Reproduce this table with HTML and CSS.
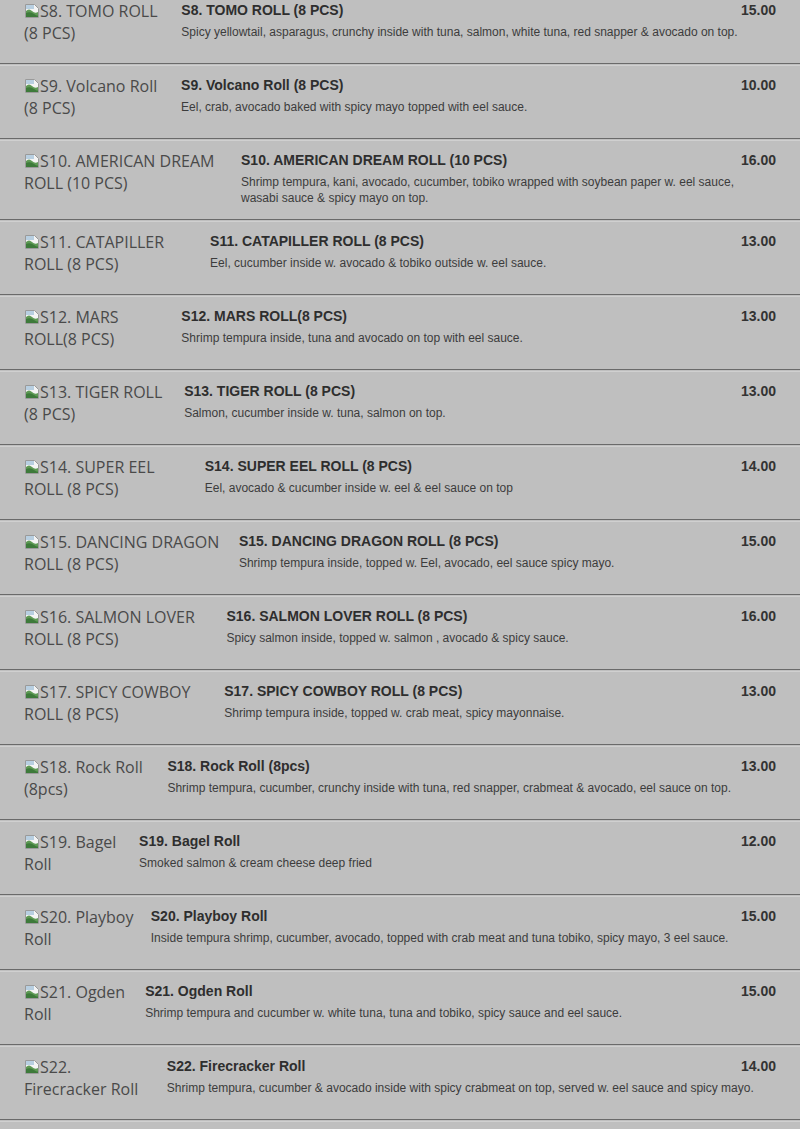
FILE: index.html
```html
<!DOCTYPE html>
<html lang="en">
<head>
<meta charset="utf-8">
<title>Sushi Rolls</title>
<link rel="stylesheet" href="styles.css">
</head>
<body>
<svg width="0" height="0" class="defs" aria-hidden="true">
  <defs>
    <symbol id="broken" viewBox="0 0 16 16">
      <path d="M1.5 1.5h9l4 4v9h-13z" fill="#f4f4f4" stroke="#9a9a9a"/>
      <path d="M2 8 Q5 5 8 8 T14 9 V14 H2z" fill="#5f9a55"/>
      <path d="M2 2h8v4H2z" fill="#a9c6dc" opacity="0.8"/>
      <path d="M2 10 Q6 8 10 11 T14 12 V14 H2z" fill="#3d7a3a"/>
    </symbol>
  </defs>
</svg>
<div class="menu">
  <div class="item">
    <div class="thumb"><svg class="bi"><use href="#broken"/></svg>S8. TOMO ROLL (8 PCS)</div>
    <div class="info"><div class="price">15.00</div><div class="name">S8. TOMO ROLL (8 PCS)</div><div class="desc">Spicy yellowtail, asparagus, crunchy inside with tuna, salmon, white tuna, red snapper &amp; avocado on top.</div></div>
  </div>
  <div class="item">
    <div class="thumb"><svg class="bi"><use href="#broken"/></svg>S9. Volcano Roll (8 PCS)</div>
    <div class="info"><div class="price">10.00</div><div class="name">S9. Volcano Roll (8 PCS)</div><div class="desc">Eel, crab, avocado baked with spicy mayo topped with eel sauce.</div></div>
  </div>
  <div class="item">
    <div class="thumb"><svg class="bi"><use href="#broken"/></svg>S10. AMERICAN DREAM ROLL (10 PCS)</div>
    <div class="info"><div class="price">16.00</div><div class="name">S10. AMERICAN DREAM ROLL (10 PCS)</div><div class="desc">Shrimp tempura, kani, avocado, cucumber, tobiko wrapped with soybean paper w. eel sauce, wasabi sauce &amp; spicy mayo on top.</div></div>
  </div>
  <div class="item">
    <div class="thumb"><svg class="bi"><use href="#broken"/></svg>S11. CATAPILLER ROLL (8 PCS)</div>
    <div class="info"><div class="price">13.00</div><div class="name">S11. CATAPILLER ROLL (8 PCS)</div><div class="desc">Eel, cucumber inside w. avocado &amp; tobiko outside w. eel sauce.</div></div>
  </div>
  <div class="item">
    <div class="thumb"><svg class="bi"><use href="#broken"/></svg>S12. MARS ROLL(8 PCS)</div>
    <div class="info"><div class="price">13.00</div><div class="name">S12. MARS ROLL(8 PCS)</div><div class="desc">Shrimp tempura inside, tuna and avocado on top with eel sauce.</div></div>
  </div>
  <div class="item">
    <div class="thumb"><svg class="bi"><use href="#broken"/></svg>S13. TIGER ROLL (8 PCS)</div>
    <div class="info"><div class="price">13.00</div><div class="name">S13. TIGER ROLL (8 PCS)</div><div class="desc">Salmon, cucumber inside w. tuna, salmon on top.</div></div>
  </div>
  <div class="item">
    <div class="thumb"><svg class="bi"><use href="#broken"/></svg>S14. SUPER EEL ROLL (8 PCS)</div>
    <div class="info"><div class="price">14.00</div><div class="name">S14. SUPER EEL ROLL (8 PCS)</div><div class="desc">Eel, avocado &amp; cucumber inside w. eel &amp; eel sauce on top</div></div>
  </div>
  <div class="item">
    <div class="thumb"><svg class="bi"><use href="#broken"/></svg>S15. DANCING DRAGON ROLL (8 PCS)</div>
    <div class="info"><div class="price">15.00</div><div class="name">S15. DANCING DRAGON ROLL (8 PCS)</div><div class="desc">Shrimp tempura inside, topped w. Eel, avocado, eel sauce spicy mayo.</div></div>
  </div>
  <div class="item">
    <div class="thumb"><svg class="bi"><use href="#broken"/></svg>S16. SALMON LOVER ROLL (8 PCS)</div>
    <div class="info"><div class="price">16.00</div><div class="name">S16. SALMON LOVER ROLL (8 PCS)</div><div class="desc">Spicy salmon inside, topped w. salmon , avocado &amp; spicy sauce.</div></div>
  </div>
  <div class="item">
    <div class="thumb"><svg class="bi"><use href="#broken"/></svg>S17. SPICY COWBOY ROLL (8 PCS)</div>
    <div class="info"><div class="price">13.00</div><div class="name">S17. SPICY COWBOY ROLL (8 PCS)</div><div class="desc">Shrimp tempura inside, topped w. crab meat, spicy mayonnaise.</div></div>
  </div>
  <div class="item">
    <div class="thumb"><svg class="bi"><use href="#broken"/></svg>S18. Rock Roll (8pcs)</div>
    <div class="info"><div class="price">13.00</div><div class="name">S18. Rock Roll (8pcs)</div><div class="desc">Shrimp tempura, cucumber, crunchy inside with tuna, red snapper, crabmeat &amp; avocado, eel sauce on top.</div></div>
  </div>
  <div class="item">
    <div class="thumb"><svg class="bi"><use href="#broken"/></svg>S19. Bagel Roll</div>
    <div class="info"><div class="price">12.00</div><div class="name">S19. Bagel Roll</div><div class="desc">Smoked salmon &amp; cream cheese deep fried</div></div>
  </div>
  <div class="item">
    <div class="thumb"><svg class="bi"><use href="#broken"/></svg>S20. Playboy Roll</div>
    <div class="info"><div class="price">15.00</div><div class="name">S20. Playboy Roll</div><div class="desc">Inside tempura shrimp, cucumber, avocado, topped with crab meat and tuna tobiko, spicy mayo, 3 eel sauce.</div></div>
  </div>
  <div class="item">
    <div class="thumb"><svg class="bi"><use href="#broken"/></svg>S21. Ogden Roll</div>
    <div class="info"><div class="price">15.00</div><div class="name">S21. Ogden Roll</div><div class="desc">Shrimp tempura and cucumber w. white tuna, tuna and tobiko, spicy sauce and eel sauce.</div></div>
  </div>
  <div class="item">
    <div class="thumb"><svg class="bi"><use href="#broken"/></svg>S22. Firecracker Roll</div>
    <div class="info"><div class="price">14.00</div><div class="name">S22. Firecracker Roll</div><div class="desc">Shrimp tempura, cucumber &amp; avocado inside with spicy crabmeat on top, served w. eel sauce and spicy mayo.</div></div>
  </div>
</div>
</body>
</html>
```

FILE: styles.css
```css
html, body {
  margin: 0;
  padding: 0;
  background: #bfbfbf;
}
.defs {
  position: absolute;
  width: 0;
  height: 0;
}
.menu {
  margin-top: -11px;
}
.menu::after {
  content: "";
  display: block;
  margin-top: 1px;
  border-top: 1px solid #d0d0d0;
}
.item {
  display: flex;
  align-items: flex-start;
  margin-top: 1px;
  padding: 9px 24px 13px;
  border-top: 1px solid #d0d0d0;
  border-bottom: 1px solid #6a6a6a;
}
.thumb {
  flex: 0 1 auto;
  margin: 0 15px 6px 0;
  font-family: "Open Sans", sans-serif;
  font-size: 16px;
  line-height: 22px;
  color: #4a4a4a;
}
.bi {
  width: 16px;
  height: 16px;
  vertical-align: -2px;
}
.info {
  width: 105%;
  font-family: "Liberation Sans", Arial, sans-serif;
}
.name {
  font-size: 14px;
  font-weight: bold;
  line-height: 20px;
  color: #2e2e2e;
}
.desc {
  margin-top: 4px;
  padding-right: 12px;
  font-size: 12px;
  line-height: 16px;
  color: #3c3c3c;
}
.price {
  float: right;
  margin-left: 12px;
  font-size: 14px;
  font-weight: bold;
  line-height: 20px;
  color: #333;
}
```
